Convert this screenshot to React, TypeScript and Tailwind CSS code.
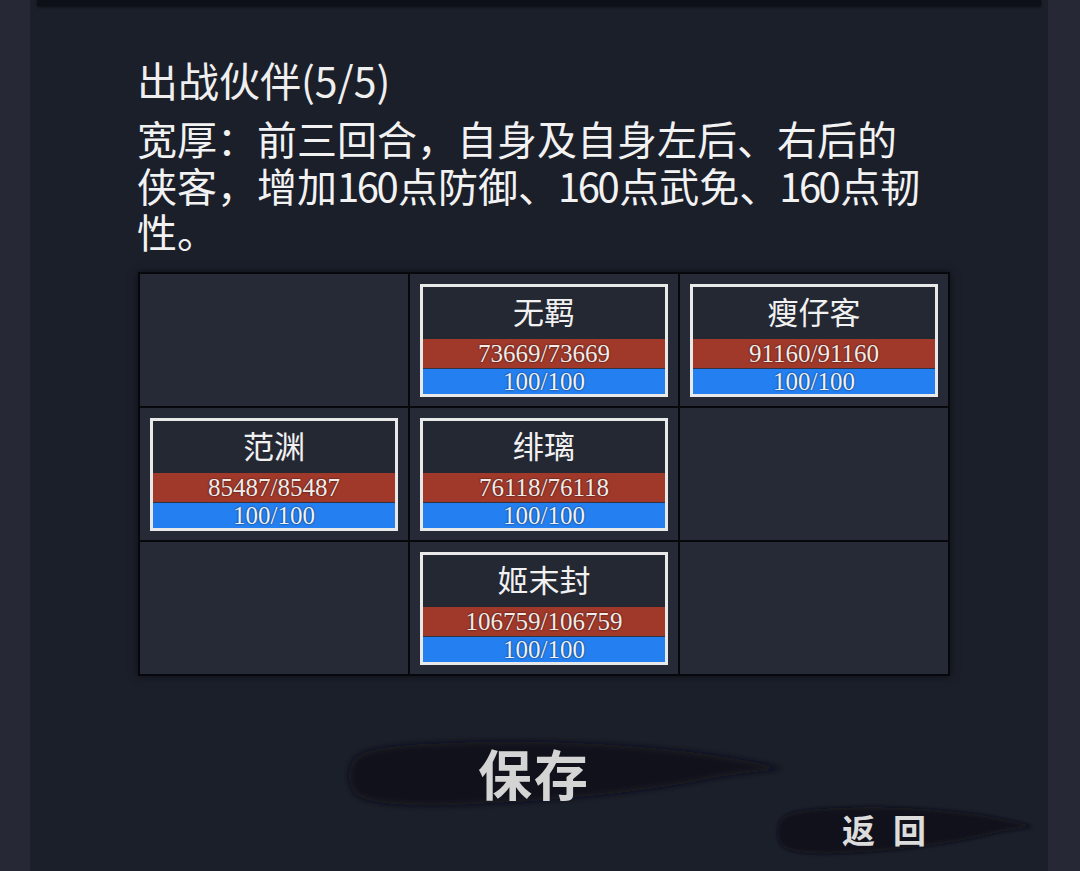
import React from 'react';

type Partner = { name: string; hp: number; mp: number };

// 3x3 formation, null = empty slot
const FORMATION: (Partner | null)[] = [
  null,
  { name: '无羁', hp: 73669, mp: 100 },
  { name: '瘦仔客', hp: 91160, mp: 100 },
  { name: '范渊', hp: 85487, mp: 100 },
  { name: '绯璃', hp: 76118, mp: 100 },
  null,
  null,
  { name: '姬末封', hp: 106759, mp: 100 },
  null,
];

const CJK = "font-['Noto_Sans_CJK_SC',sans-serif]";
const NUM = "font-['Liberation_Serif','DejaVu_Serif',serif]";

// digits in the game font are narrower than Noto's
const Num = ({ children }: { children: React.ReactNode }) => (
  <span className="tracking-[-2.5px] mr-[2px]">{children}</span>
);

function PartnerCard({ p }: { p: Partner }) {
  return (
    <div className="flex flex-col h-full border-[3px] border-[#e9e9ea] bg-[#242833]">
      <div className={`h-[53px] pb-[5px] flex items-center justify-center text-[31px] leading-none text-[#f1f1f1] ${CJK}`}>
        {p.name}
      </div>
      <div className={`h-[29px] flex items-center justify-center bg-[#a1392b] text-[25px] leading-none text-[#f4ece8] ${NUM} [text-shadow:0_0_2px_rgba(20,10,10,0.95)]`}>
        {p.hp}/{p.hp}
      </div>
      <div className={`flex-1 flex items-center justify-center bg-[#2480f1] border-t border-[#2d3446] text-[25px] leading-none text-[#eef3fb] ${NUM} [text-shadow:0_0_2px_rgba(10,20,40,0.95)]`}>
        {p.mp}/{p.mp}
      </div>
    </div>
  );
}

function BrushButton({ label, width, height, textClass }: { label: string; width: number; height: number; textClass: string }) {
  return (
    <div className="relative flex items-center" style={{ width, height }}>
      <svg className="absolute inset-0 overflow-visible" width={width} height={height} viewBox="0 0 420 80" preserveAspectRatio="none">
        <defs>
          <filter id={`soft-${label}`} x="-20%" y="-50%" width="140%" height="200%">
            <feGaussianBlur stdDeviation="3" />
          </filter>
        </defs>
        <path
          d="M6 32 C10 16 44 12 120 10 C210 8 300 14 360 24 C385 28 405 32 418 36 C400 38 380 40 350 45 C300 56 220 66 130 70 C60 74 14 70 8 58 C3 50 3 40 6 32 Z"
          fill="#0c0e14"
          fillOpacity="0.85"
          filter={`url(#soft-${label})`}
        />
      </svg>
      <span className={`relative ${CJK} ${textClass}`}>{label}</span>
    </div>
  );
}

export default function App() {
  return (
    <div className="w-[1080px] h-[871px] bg-[#262935] flex overflow-hidden">
      <div className="ml-[30px] w-[1018px] h-full bg-[#1b1f2a] flex flex-col">
        {/* dark strip of the panel above */}
        <div className="mx-[7px] h-[6px] bg-[#0e1018] shadow-[0_1px_3px_rgba(0,0,0,0.6)]" />

        <div className="pl-[107px] pt-[49px] flex flex-col">
          <h1 className={`text-[41px] leading-[48px] text-[#efefef] font-normal ${CJK}`}>出战伙伴(5/5)</h1>
          <p className={`mt-[12px] text-[40px] leading-[46.5px] text-[#f2f2f2] whitespace-nowrap ${CJK}`}>
            宽厚：前三回合，自身及自身左后、右后的
            <br />
            侠客，增加<Num>160</Num>点防御、<Num>160</Num>点武免、<Num>160</Num>点韧
            <br />
            性。
          </p>

          <div className="mt-[17px] ml-[1px] w-[812px] grid grid-cols-3 gap-[2px] p-[2px] bg-[#07080c] shadow-[0_0_8px_rgba(0,0,0,0.55)]">
            {FORMATION.map((p, i) => (
              <div key={i} className="h-[132px] bg-[#262a36] p-[10px] pb-[9px]">
                {p && <PartnerCard p={p} />}
              </div>
            ))}
          </div>
        </div>

        <div className="mt-[56px] pl-[315px]">
          <BrushButton label="保存" width={440} height={82} textClass="ml-[133px] text-[54px] leading-none font-semibold text-[#d4d4d4] tracking-[2px]" />
        </div>
        <div className="-mt-[14px] pl-[745px]">
          <BrushButton label="返回" width={260} height={60} textClass="ml-[67px] text-[33px] leading-none font-bold text-[#dcdcdc] tracking-[18px]" />
        </div>
      </div>
    </div>
  );
}
